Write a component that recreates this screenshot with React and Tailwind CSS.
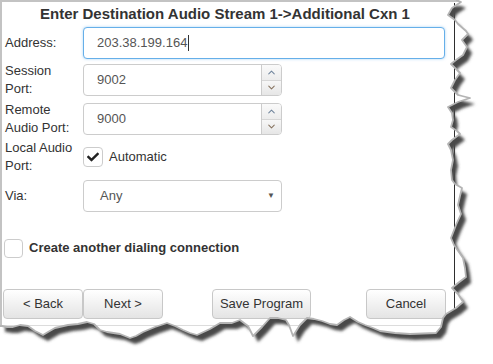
import { ChevronUp, ChevronDown } from 'lucide-react';
import { FaCheck } from 'react-icons/fa';

// torn edge of the screenshot: right side top→bottom, then bottom right→left
const tear = [
    [456, 0], [461, 2], [452, 8], [448, 15], [455, 20], [458, 24], [466, 31], [468, 34],
    [462, 40], [467, 47], [463, 55], [456, 60], [451, 64], [457, 70], [460, 73], [455, 80],
    [451, 88], [458, 95], [470, 98], [458, 102], [448, 107], [452, 113], [453, 120], [451, 127],
    [457, 131], [460, 134], [452, 140], [448, 144], [451, 150], [453, 160], [451, 170], [452, 180],
    [455, 184], [462, 188], [460, 196], [458, 205], [461, 214], [456, 225], [451, 238], [454, 245],
    [463, 258], [465, 268], [466, 277], [458, 283], [452, 288], [458, 294], [463, 302], [456, 308],
    [446, 314], [443, 318], [441, 327], [436, 333],
    [410, 334], [395, 333], [380, 331], [373, 328], [365, 325], [358, 322], [350, 317], [344, 320],
    [337, 325], [330, 324], [322, 321], [314, 319], [307, 318], [300, 325], [293, 336], [289, 325],
    [286, 320], [278, 318], [270, 318], [262, 327], [253, 336], [248, 326], [240, 320], [232, 323],
    [220, 323], [210, 329], [197, 335], [190, 333], [183, 330], [175, 326], [167, 323], [155, 327],
    [143, 332], [136, 336], [130, 338], [120, 334], [107, 332], [100, 330], [94, 324], [87, 322],
    [78, 324], [68, 325], [55, 328], [48, 332], [43, 335], [35, 331], [28, 326], [20, 325],
    [13, 327], [7, 327], [2, 326], [0, 326],
];

const tearPts = tear.map(p => p.join(',')).join(' ');
const paperPts = '0,0 ' + tearPts;
const outsidePts = tearPts + ' 0,364 493,364 493,0';

function TornEdge() {
    return (
        <svg className="absolute inset-0 pointer-events-none" width="493" height="364" viewBox="0 0 493 364">
            <defs>
                <clipPath id="outside">
                    <polygon points={outsidePts} />
                </clipPath>
                <filter id="blur" x="-10%" y="-10%" width="120%" height="120%">
                    <feGaussianBlur stdDeviation="1.7" />
                </filter>
            </defs>
            <polygon points={outsidePts} fill="#fff" />
            <line x1="454.5" y1="3" x2="454.5" y2="311" stroke="#2e2e2e" strokeWidth="1" />
            <g clipPath="url(#outside)">
                <polygon points={paperPts} fill="#4a4a4a" transform="translate(5 6)" filter="url(#blur)" />
            </g>
            <polyline points={tearPts} fill="none" stroke="#b4b4b4" strokeWidth="1.8" strokeLinejoin="round" />
        </svg>
    );
}

const inputCls = 'h-[32px] border border-[#ccc] rounded-[4px] bg-white pl-[13px] flex items-center text-[13px] text-[#555]';

function Label({ children }) {
    return (
        <div className="w-[81px] pl-[3px] leading-[18px] text-[13px] text-[#333]">
            {children}
        </div>
    );
}

function Spinner({ value }) {
    return (
        <div className="flex w-[199px] h-[32px] border border-[#ccc] rounded-[4px] bg-white overflow-hidden">
            <div className="flex-1 flex items-center pl-[13px] text-[13px] text-[#555]">{value}</div>
            <div className="w-[20px] flex flex-col border-l border-[#ccc]">
                <div className="flex-1 flex items-center justify-center bg-linear-to-b from-[#fafafa] to-[#ececec] border-b border-[#d6d6d6]">
                    <ChevronUp size={11} strokeWidth={2.2} color="#6f849c" />
                </div>
                <div className="flex-1 flex items-center justify-center bg-linear-to-b from-[#f7f7f7] to-[#e6e6e6]">
                    <ChevronDown size={11} strokeWidth={2.2} color="#86725e" />
                </div>
            </div>
        </div>
    );
}

const btnCls = [
    'h-[30px] border border-[#c8c8c8] rounded-[4px]',
    'bg-linear-to-b from-white to-[#e4e4e4]',
    'text-[13px] text-[#333] flex items-center justify-center',
].join(' ');

export default function App() {
    return (
        <div className="relative w-[493px] h-[364px] bg-white overflow-hidden font-['Liberation_Sans',Arial,sans-serif]">
            <div className="w-[470px] h-[326px] border-t-2 border-l-2 border-[#c3c3c3] border-b border-b-[#dcdcdc] flex flex-col">
                <div className="h-[25px] pl-[38px] flex items-center font-bold text-[15px] text-[#333] whitespace-nowrap">
                    Enter Destination Audio Stream 1-&gt;Additional Cxn 1
                </div>

                {/* Address */}
                <div className="flex items-center h-[32px]">
                    <Label>Address:</Label>
                    <div className={inputCls + ' w-[362px] !border-[#66afe9] shadow-[0_0_3px_rgba(102,175,233,0.55)]'}>
                        203.38.199.164
                        <span className="ml-[1px] w-px h-[16px] bg-[#333]" />
                    </div>
                </div>

                {/* Session port */}
                <div className="flex items-center h-[32px] mt-[5px]">
                    <Label>Session<br />Port:</Label>
                    <Spinner value="9002" />
                </div>

                {/* Remote audio port */}
                <div className="flex items-center h-[32px] mt-[7px]">
                    <Label>Remote<br />Audio Port:</Label>
                    <Spinner value="9000" />
                </div>

                {/* Local audio port */}
                <div className="flex items-center h-[36px] mt-[4px]">
                    <Label>Local Audio<br />Port:</Label>
                    <div className="w-[20px] h-[20px] border border-[#ccc] rounded-[4px] bg-white flex items-center justify-center">
                        <FaCheck size={12} color="#222" />
                    </div>
                    <span className="ml-[6px] text-[13px] text-[#333]">Automatic</span>
                </div>

                {/* Via */}
                <div className="flex items-center h-[32px] mt-[5px]">
                    <Label>Via:</Label>
                    <div className={inputCls + ' w-[199px] pl-[16px] pr-[6px] justify-between'}>
                        <span>Any</span>
                        <span className="text-[8px] text-[#555]">▼</span>
                    </div>
                </div>

                {/* Create another */}
                <div className="flex items-center mt-[26px] pl-[2px] h-[20px]">
                    <div className="w-[19px] h-[19px] border border-[#ccc] rounded-[4px] bg-white" />
                    <span className="ml-[6px] font-bold text-[13px] text-[#333]">Create another dialing connection</span>
                </div>

                {/* Buttons */}
                <div className="flex items-center mt-[31px] pl-[1px]">
                    <button className={btnCls + ' w-[80px]'}>&lt; Back</button>
                    <button className={btnCls + ' w-[80px]'}>Next &gt;</button>
                    <button className={btnCls + ' w-[99px] ml-[49px]'}>Save Program</button>
                    <button className={btnCls + ' w-[80px] ml-[55px]'}>Cancel</button>
                </div>
            </div>
            <TornEdge />
        </div>
    );
}
